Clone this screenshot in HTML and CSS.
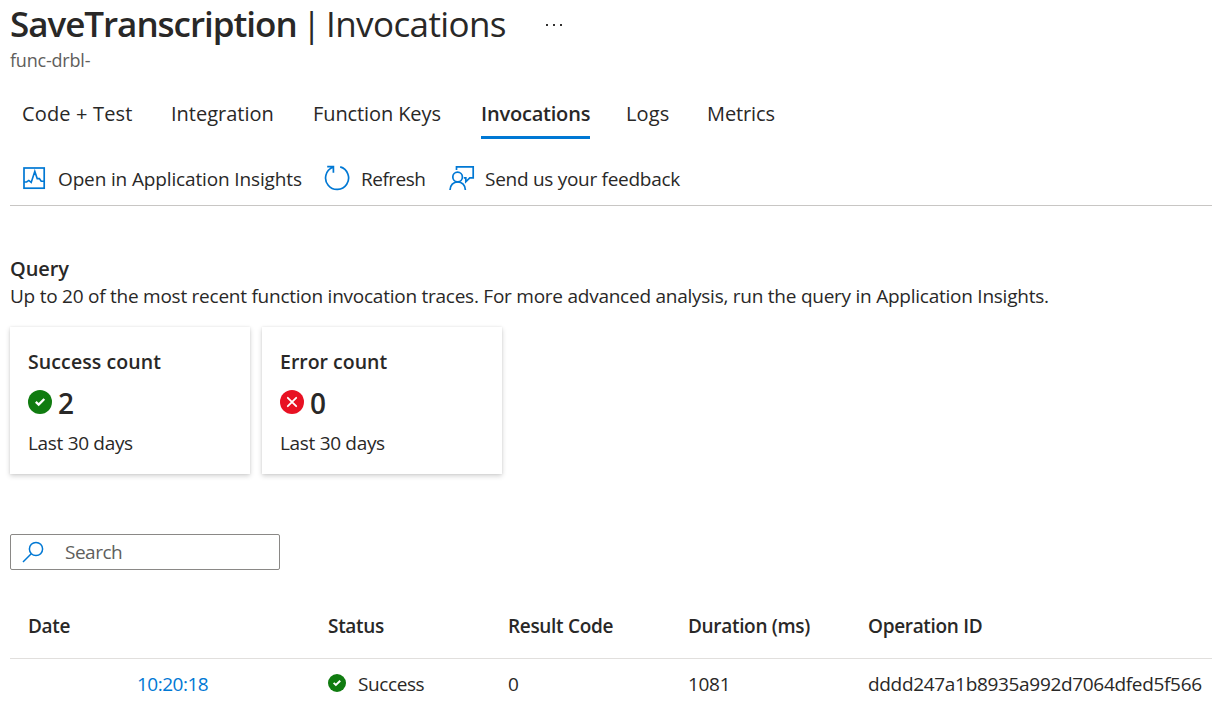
FILE: index.html
```html
<!DOCTYPE html>
<html lang="en">
<head>
<meta charset="utf-8">
<title>SaveTranscription | Invocations</title>
<link rel="stylesheet" href="styles.css">
</head>
<body>
<header class="header">
  <div class="title-row">
    <h1 class="title"><span class="title-name">SaveTranscription</span><span class="title-bar">|</span><span class="title-view">Invocations</span></h1>
    <svg class="more" width="18" height="4" viewBox="0 0 18 4" fill="#323130"><rect x="0" y="1" width="2" height="2"/><rect x="7" y="1" width="2" height="2"/><rect x="14" y="1" width="2" height="2"/></svg>
  </div>
  <div class="subtitle">func-drbl-</div>
</header>
<nav class="tabs">
  <a class="tab tab-code">Code + Test</a>
  <a class="tab tab-integration">Integration</a>
  <a class="tab tab-keys">Function Keys</a>
  <a class="tab tab-active">Invocations</a>
  <a class="tab tab-logs">Logs</a>
  <a class="tab tab-metrics">Metrics</a>
</nav>
<div class="toolbar">
  <div class="command command-insights">
    <svg width="24" height="24" viewBox="0 0 24 24" fill="none" stroke="#0078d4" stroke-width="1.7"><rect x="2" y="2" width="20.2" height="20.2"/><path d="M2 16h2.6l2.2-1.6 2.4 2L12.8 5.4l2.4 7.2h2.2l1.8 2.6H22" stroke-width="1.6"/></svg>
    <span class="label-insights">Open in Application Insights</span>
  </div>
  <div class="command command-refresh">
    <svg width="26" height="26" viewBox="0 0 26 26" fill="none" stroke="#0078d4" stroke-width="1.7"><path d="M16.2 1.9A11.5 11.5 0 1 1 8.8 2.3M3.2 1.7h6.2v6.1"/></svg>
    <span class="label-refresh">Refresh</span>
  </div>
  <div class="command command-feedback">
    <svg width="26" height="26" viewBox="0 0 26 26" fill="none" stroke="#0078d4" stroke-width="1.7"><path d="M7.5 5V1.8h16.7v11h-3.4l-4 4v-4h-2"/><circle cx="8.6" cy="12" r="4.8"/><path d="M1 25a7.7 8.2 0 0 1 15.4 0"/></svg>
    <span class="label-feedback">Send us your feedback</span>
  </div>
</div>
<main>
  <h2 class="query-title">Query</h2>
  <p class="query-text">Up to 20 of the most recent function invocation traces. For more advanced analysis, run the query in Application Insights.</p>
  <div class="cards">
    <section class="card">
      <h3 class="card-title">Success count</h3>
      <div class="card-value"><svg width="24" height="24" viewBox="0 0 24 24"><circle cx="12" cy="12" r="12" fill="#107c10"/><path d="M7.8 11.8l2.9 2.8 5.6-5.6" fill="none" stroke="#fff" stroke-width="2.3"/></svg><span>2</span></div>
      <div class="card-period">Last 30 days</div>
    </section>
    <section class="card">
      <h3 class="card-title card-title-error">Error count</h3>
      <div class="card-value"><svg width="24" height="24" viewBox="0 0 24 24"><circle cx="12" cy="12" r="12" fill="#e81123"/><path d="M7.8 7.8l8.4 8.4m0-8.4l-8.4 8.4" fill="none" stroke="#fff" stroke-width="1.8" stroke-linecap="round"/></svg><span>0</span></div>
      <div class="card-period">Last 30 days</div>
    </section>
  </div>
  <div class="search">
    <svg width="22" height="22" viewBox="0 0 22 22" fill="none" stroke="#0078d4" stroke-width="1.5"><circle cx="14" cy="8" r="6.6"/><path d="M9.2 12.8L1 21"/></svg>
    <span>Search</span>
  </div>
  <div class="table">
    <div class="row row-head">
      <div class="cell">Date</div><div class="cell">Status</div><div class="cell">Result Code</div><div class="cell">Duration (ms)</div><div class="cell">Operation ID</div>
    </div>
    <div class="row row-body">
      <div class="cell cell-date">10:20:18</div>
      <div class="cell cell-status"><svg width="18" height="18" viewBox="0 0 24 24"><circle cx="12" cy="12" r="12" fill="#107c10"/><path d="M7.5 11.8l3 2.8 5.8-5.6" fill="none" stroke="#fff" stroke-width="2.6"/></svg><span>Success</span></div>
      <div class="cell">0</div><div class="cell">1081</div><div class="cell">dddd247a1b8935a992d7064dfed5f566</div>
    </div>
  </div>
</main>
</body>
</html>
```
FILE: styles.css
```css
* { box-sizing: border-box; }
body {
  margin: 0;
  padding-left: 10px;
  height: 707px;
  overflow: hidden;
  background: #fff;
  color: #292827;
  font-family: "Open Sans", "Noto Sans", sans-serif;
  font-size: 19px;
  letter-spacing: -0.32px;
  white-space: nowrap;
}
h1, h2, h3, p { margin: 0; }
svg { display: block; flex: none; }

.header { height: 76px; }
.title-row { display: flex; height: 48px; }
.title { display: flex; width: 536px; font-size: 35px; line-height: 48px; font-weight: 400; }
.title-name { width: 292px; font-weight: 600; letter-spacing: -1.03px; }
.title-bar { width: 24px; letter-spacing: 0; }
.title-view { letter-spacing: -0.6px; }
.more { margin-top: 23px; }
.subtitle { font-size: 18px; line-height: 24px; color: #605e5c; letter-spacing: -0.2px; }

.tabs { display: flex; height: 63px; padding-left: 12px; font-size: 20px; line-height: 28px; }
.tab { padding-top: 24px; }
.tab-code { width: 149px; letter-spacing: 0.15px; }
.tab-integration { width: 142px; letter-spacing: 0; }
.tab-keys { width: 168px; letter-spacing: -0.1px; }
.tab-active { width: 109px; margin-right: 36px; font-weight: 600; letter-spacing: -0.2px; border-bottom: 3px solid #0078d4; }
.tab-logs { width: 81px; letter-spacing: 0.15px; }
.tab-metrics { letter-spacing: -0.1px; }

.toolbar { display: flex; height: 67px; padding: 13px 0 0 12px; border-bottom: 1px solid #c8c6c4; }
.command { display: flex; align-items: center; height: 52px; }
.command span { padding-top: 1px; }
.command-insights { width: 302px; gap: 12px; }
.command-refresh { width: 125px; gap: 11px; }
.command-feedback { gap: 10px; }
.label-insights { letter-spacing: -0.14px; }
.label-refresh { letter-spacing: -0.5px; }
.label-feedback { letter-spacing: -0.28px; }

.query-title { margin-top: 49px; font-size: 20px; line-height: 28px; font-weight: 600; letter-spacing: -0.1px; }
.query-text { line-height: 27px; letter-spacing: -0.247px; }
.cards { display: flex; gap: 12px; margin-top: 17px; }
.card { width: 240px; height: 147px; padding: 21px 18px 19px; background: #fff; box-shadow: 0 2px 5px rgba(0,0,0,.18), 0 0 2px rgba(0,0,0,.08); }
.card-title { font-size: 19.5px; line-height: 28px; font-weight: 600; letter-spacing: 0.1px; }
.card-title-error { letter-spacing: 0; }
.card-value { display: flex; align-items: center; gap: 6px; height: 53px; font-size: 28px; font-weight: 600; }
.card-value svg { margin-bottom: 2px; }
.card-value span { padding-top: 1px; }
.card-period { line-height: 28px; }

.search { display: flex; align-items: center; gap: 21px; width: 270px; height: 36px; margin-top: 60px; padding-left: 11px; border: 1px solid #8a8886; border-radius: 2px; color: #605e5c; letter-spacing: -0.5px; }
.table { margin-top: 24px; }
.row { display: grid; grid-template-columns: 300px 180px 180px 180px 1fr; padding-left: 18px; align-items: center; }
.row-head { height: 65px; border-bottom: 1px solid #e1dfdd; font-weight: 600; }
.row-body { height: 50px; }
.cell-date { padding-left: 109px; color: #0078d4; letter-spacing: -0.5px; }
.cell-status { display: flex; align-items: center; gap: 12px; letter-spacing: -0.4px; }
.cell-status svg { margin-bottom: 2px; }
```
